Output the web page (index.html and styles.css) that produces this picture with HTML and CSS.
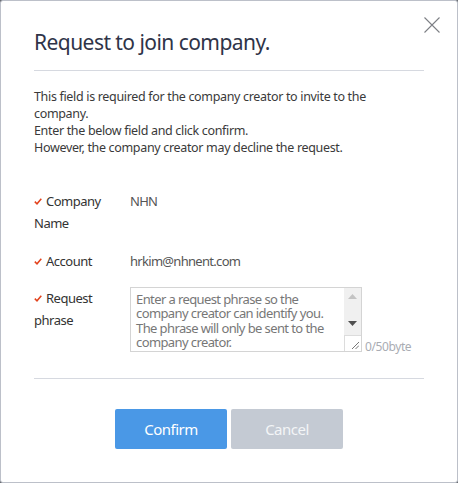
FILE: index.html
```html
<!DOCTYPE html>
<html lang="en">
<head>
<meta charset="utf-8">
<title>Request to join company</title>
<link rel="stylesheet" href="styles.css">
</head>
<body>
<div class="modal">
  <button class="close" aria-label="Close">
    <svg width="16" height="16" viewBox="0 0 16 16"><path d="M0.5 0.5L15.5 15.5M15.5 0.5L0.5 15.5" stroke="#7d7f85" stroke-width="1.1" fill="none"/></svg>
  </button>
  <h1 class="title">Request to join company.</h1>
  <hr class="rule">
  <p class="desc">This field is required for the company creator to invite to the company.<br>Enter the below field and click confirm.<br>However, the company creator may decline the request.</p>
  <div class="form">
    <div class="row row-company">
      <div class="label"><svg class="check" width="8" height="7" viewBox="0 0 8 7"><path d="M0.8 3.6L3 5.8L7.3 0.8" stroke="#e2421c" stroke-width="1.5" fill="none"/></svg>Company Name</div>
      <div class="value">NHN</div>
    </div>
    <div class="row row-account">
      <div class="label"><svg class="check" width="8" height="7" viewBox="0 0 8 7"><path d="M0.8 3.6L3 5.8L7.3 0.8" stroke="#e2421c" stroke-width="1.5" fill="none"/></svg>Account</div>
      <div class="value">hrkim@nhnent.com</div>
    </div>
    <div class="row row-request">
      <div class="label"><svg class="check" width="8" height="7" viewBox="0 0 8 7"><path d="M0.8 3.6L3 5.8L7.3 0.8" stroke="#e2421c" stroke-width="1.5" fill="none"/></svg>Request phrase</div>
      <div class="field">
        <div class="box">
          <textarea class="ta" placeholder="Enter a request phrase so the company creator can identify you. The phrase will only be sent to the company creator."></textarea>
          <div class="sbar">
            <div class="track">
              <svg width="9" height="5" viewBox="0 0 9 5"><path d="M0 5L4.5 0L9 5Z" fill="#c3c3c3"/></svg>
              <svg width="9" height="5" viewBox="0 0 9 5"><path d="M0 0L9 0L4.5 5Z" fill="#4f4f4f"/></svg>
            </div>
            <div class="grip">
              <svg width="8" height="8" viewBox="0 0 8 8"><path d="M1 8L8 1M4.5 8L8 4.5" stroke="#777" stroke-width="1" fill="none"/></svg>
            </div>
          </div>
        </div>
        <span class="count">0/50byte</span>
      </div>
    </div>
  </div>
  <hr class="rule rule2">
  <div class="actions">
    <button class="btn btn-confirm">Confirm</button>
    <button class="btn btn-cancel">Cancel</button>
  </div>
</div>
</body>
</html>
```

FILE: styles.css
```css
html, body {
  margin: 0;
  padding: 0;
}
body {
  background: #6b6e75;
  font-family: "Noto Sans", "Noto Sans CJK KR", sans-serif;
  color: #333;
}
.modal {
  position: relative;
  box-sizing: border-box;
  width: 458px;
  height: 483px;
  background: #fff;
  border: 1px solid #bcc0c9;
  border-radius: 3px;
  padding: 27px 33px 0;
}
.close {
  position: absolute;
  top: 16px;
  right: 17px;
  width: 16px;
  height: 16px;
  padding: 0;
  border: 0;
  background: none;
  display: block;
}
.close svg { display: block; }
.title {
  margin: 0;
  font-size: 21px;
  line-height: 28px;
  font-weight: 400;
  color: #2f3448;
  letter-spacing: -0.55px;
}
.rule {
  margin: 14px 0 0;
  border: 0;
  border-top: 1px solid #d6d9e0;
  height: 0;
}
.desc {
  margin: 17px 0 0;
  max-width: 370px;
  font-size: 12.5px;
  line-height: 17px;
  color: #3a3a3a;
  letter-spacing: -0.33px;
}
.form {
  margin-top: 34px;
  font-size: 13px;
  line-height: 22px;
  letter-spacing: -0.5px;
}
.row {
  display: flex;
  align-items: flex-start;
}
.row-account { margin-top: 16px; }
.row-request { margin-top: 15px; }
.label {
  width: 96px;
  color: #333;
}
.check {
  margin-right: 4px;
  vertical-align: 1px;
}
.value {
  color: #555;
  letter-spacing: -0.7px;
}
.field {
  display: flex;
  align-items: flex-end;
}
.box {
  display: flex;
  width: 232px;
  height: 65px;
  box-sizing: border-box;
  border: 1px solid #d4d4d4;
  background: #fff;
}
.ta {
  flex: 1;
  border: 0;
  margin: 0;
  padding: 4px 5px 0;
  resize: none;
  overflow: hidden;
  font-family: "Noto Sans", sans-serif;
  font-size: 13px;
  line-height: 14.3px;
  letter-spacing: -0.6px;
  color: #555;
  outline: none;
}
.ta::placeholder { color: #777; opacity: 1; }
.sbar {
  width: 17px;
  display: flex;
  flex-direction: column;
}
.track {
  flex: 1;
  background: #f0f0f0;
  display: flex;
  flex-direction: column;
  justify-content: space-between;
  align-items: center;
  padding: 6px 0 9px;
}
.track svg { display: block; }
.grip {
  height: 16px;
  box-sizing: border-box;
  border-top: 1px solid #dcdcdc;
  border-left: 1px solid #dcdcdc;
  background: #fff;
  display: flex;
  align-items: flex-end;
  justify-content: flex-end;
  padding: 0 2px 2px 0;
}
.grip svg { display: block; }
.count {
  margin-left: 3px;
  font-size: 12px;
  line-height: 14px;
  color: #a9acb3;
  margin-bottom: -2px;
  letter-spacing: -0.4px;
}
.rule2 { margin-top: 26px; }
.actions {
  display: flex;
  justify-content: center;
  gap: 4px;
  margin-top: 30px;
}
.btn {
  width: 112px;
  height: 40px;
  border: 0;
  border-radius: 2px;
  font-family: "Noto Sans", sans-serif;
  font-size: 15px;
  letter-spacing: -0.5px;
  color: #fff;
  padding: 0;
}
.btn-confirm { background: #4a98e6; }
.btn-cancel { background: #c4cad3; color: #f3f5f7; }
```
